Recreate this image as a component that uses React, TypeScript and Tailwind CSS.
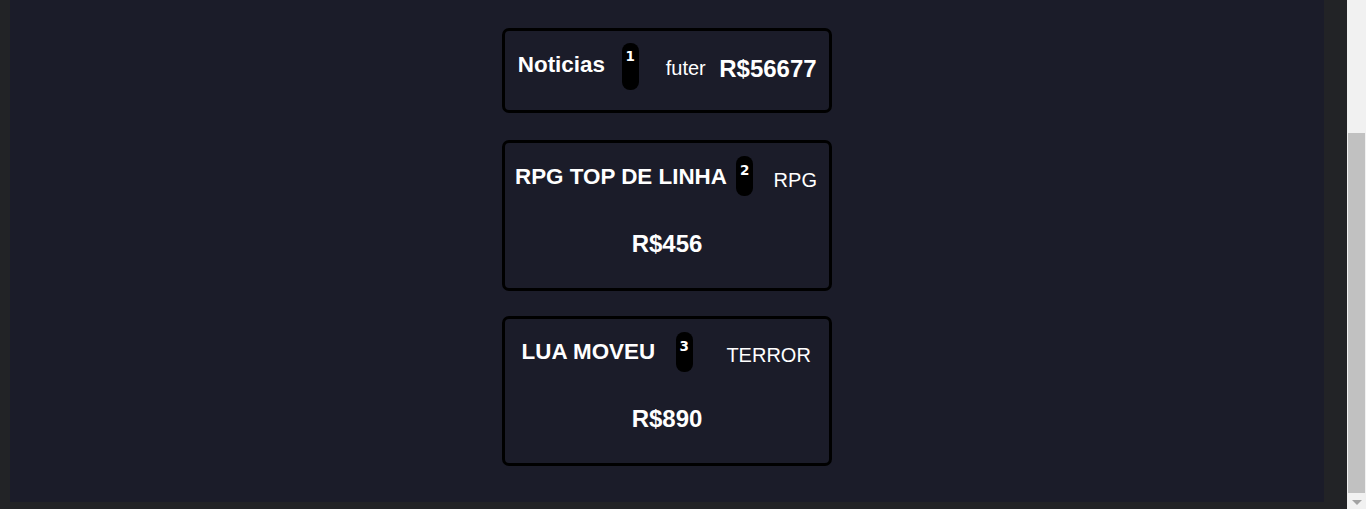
function Badge({ n, tall }: { n: number; tall?: boolean }) {
  return (
    <span
      className={
        (tall ? "h-[47px] " : "h-[40px] ") +
        "block w-[16.8px] shrink-0 rounded-[8px] bg-black pt-[7.5px] text-center font-['DejaVu_Sans',sans-serif] text-[13.5px] font-bold leading-none text-white"
      }
    >
      {n}
    </span>
  );
}

function App() {
  return (
    <div className="flex h-[509px] w-full overflow-hidden bg-[#222326] font-['Liberation_Sans',Arial,sans-serif] text-white">
      <div className="flex flex-1 flex-col pb-[7px] pl-[10px] pr-[23px]">
        <main className="flex flex-1 flex-col items-center bg-[#1b1c29] pt-[28px]">
          {/* card 1 */}
          <div className="flex h-[85px] w-[330px] items-start rounded-[7px] border-[3px] border-black pl-[12.8px] pt-[11.5px]">
            <h2 className="mt-[9.2px] whitespace-nowrap text-[22.4px] font-bold leading-[1.15]">
              Noticias
            </h2>
            <div className="ml-[17px]">
              <Badge n={1} tall />
            </div>
            <p className="ml-[27px] mt-[14.1px] whitespace-nowrap text-[20px] leading-[1.15]">
              futer
            </p>
            <h3 className="ml-[13.5px] mt-[12.4px] whitespace-nowrap text-[24px] font-bold leading-[1.15]">
              R$56677
            </h3>
          </div>

          {/* card 2 */}
          <div className="mt-[27px] flex h-[151px] w-[330px] flex-col rounded-[7px] border-[3px] border-black pt-[13px]">
            <div className="flex items-start pl-[10px]">
              <h2 className="mt-[8.1px] whitespace-nowrap text-[22.4px] font-bold leading-[1.15]">
                RPG TOP DE LINHA
              </h2>
              <div className="ml-[9.5px]">
                <Badge n={2} />
              </div>
              <p className="ml-[20.4px] mt-[13.1px] whitespace-nowrap text-[20px] leading-[1.15]">
                RPG
              </p>
            </div>
            <h3 className="mt-[34px] text-center text-[24px] font-bold leading-[1.15]">
              R$456
            </h3>
          </div>

          {/* card 3 */}
          <div className="mt-[25px] flex h-[150px] w-[330px] flex-col rounded-[7px] border-[3px] border-black pt-[13px]">
            <div className="flex items-start pl-[16.6px]">
              <h2 className="mt-[6.9px] whitespace-nowrap text-[22.4px] font-bold leading-[1.15]">
                LUA MOVEU
              </h2>
              <div className="ml-[20.7px]">
                <Badge n={3} />
              </div>
              <p className="ml-[33.8px] mt-[11.6px] whitespace-nowrap text-[20px] leading-[1.15]">
                TERROR
              </p>
            </div>
            <h3 className="mt-[33.4px] text-center text-[24px] font-bold leading-[1.15]">
              R$890
            </h3>
          </div>
        </main>
      </div>

      {/* scrollbar */}
      <div className="flex w-[19px] flex-col bg-[#f1f1f1] px-[1px]">
        <div className="h-[133px]" />
        <div className="h-[360px] bg-[#c1c1c1]" />
        <div className="flex flex-1 items-center justify-center pt-[2px]">
          <svg width="10" height="5" viewBox="0 0 10 5">
            <path d="M0 0H10L5 5Z" fill="#a3a3a3" />
          </svg>
        </div>
      </div>
    </div>
  );
}

export default App;
